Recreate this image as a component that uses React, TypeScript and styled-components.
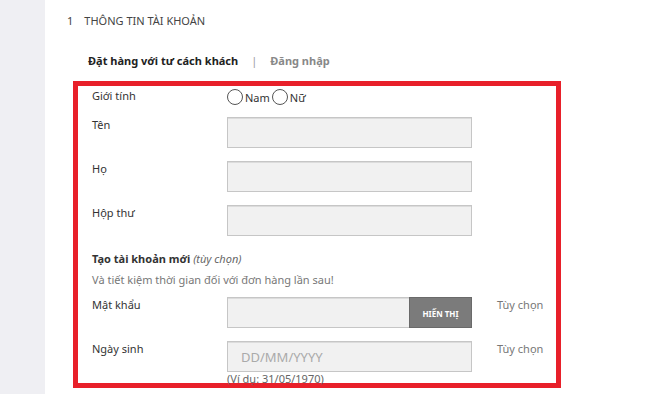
import React from "react";
import styled, { createGlobalStyle } from "styled-components";

const Global = createGlobalStyle`
  html, body { margin: 0; padding: 0; background: #fff; }
  body { font-family: "Noto Sans", "Open Sans", sans-serif; color: #333; }
  * { box-sizing: border-box; }
`;

const Page = styled.div`
  display: flex;
  width: 650px;
  height: 394px;
  overflow: hidden;
`;

const Sidebar = styled.div`
  width: 45px;
  flex: none;
  background: #efeff3;
`;

const Main = styled.div`
  flex: 1;
  padding: 12px 0 0 22px;
`;

const StepHeader = styled.div`
  display: flex;
  gap: 11px;
  font-size: 11px;
  line-height: 18px;
  color: #444;
  text-transform: uppercase;
`;

const Tabs = styled.div`
  display: flex;
  align-items: center;
  margin: 22px 0 0 21px;
  font-size: 11px;
  line-height: 18px;
  font-weight: 700;
  gap: 13px;
`;

const Tab = styled.span<{ $active?: boolean }>`
  color: ${(p) => (p.$active ? "#222" : "#888")};
`;

const Sep = styled.span`
  color: #999;
  font-weight: 400;
`;

const Box = styled.div`
  margin: 11px 0 0 6px;
  width: 488px;
  height: 307px;
  border: 5px solid #e8202a;
  padding: 2px 0 0 14px;
`;

const Row = styled.div<{ $mt: number }>`
  display: grid;
  grid-template-columns: 110px 245px auto;
  column-gap: 25px;
  margin-top: ${(p) => p.$mt}px;
  align-items: start;
`;

const Label = styled.div`
  font-size: 11px;
  line-height: 16px;
  color: #333;
`;

const Optional = styled.div`
  font-size: 11px;
  line-height: 16px;
  color: #777;
  white-space: nowrap;
`;

const Radios = styled.div`
  display: flex;
  align-items: center;
  height: 18px;
  font-size: 11px;
  color: #333;
  gap: 2px;
`;

const Radio = styled.span`
  width: 16px;
  height: 16px;
  border: 1.5px solid #555;
  border-radius: 50%;
  display: inline-block;
`;

const Input = styled.div`
  height: 31px;
  background: #f1f1f1;
  border: 1px solid #c6c6c6;
  box-shadow: inset 0 1px 0 #dcdcdc;
  display: flex;
  align-items: center;
  padding-left: 13px;
  font-size: 13px;
  color: #aaa;
`;

const PasswordWrap = styled.div`
  display: flex;
  height: 31px;
`;

const PasswordInput = styled(Input)`
  flex: 1;
  border-right: none;
`;

const ShowButton = styled.div`
  width: 63px;
  background: #7b7b7b;
  border: 1px solid #6a6a6a;
  color: #fff;
  font-size: 8px;
  font-weight: 700;
  display: flex;
  align-items: center;
  justify-content: center;
  padding-top: 2px;
`;

const Heading = styled.div`
  font-size: 11px;
  line-height: 16px;
  font-weight: 700;
  color: #333;
  margin-top: 15px;
  em {
    font-weight: 400;
    color: #666;
  }
`;

const SubText = styled.div`
  font-size: 11px;
  line-height: 16px;
  color: #777;
  margin-top: 5px;
`;

const Hint = styled.div`
  font-size: 11px;
  line-height: 12px;
  color: #666;
  margin-top: 1px;
`;

const Col = styled.div``;

export default function App() {
  return (
    <>
      <Global />
      <Page>
        <Sidebar />
        <Main>
          <StepHeader>
            <span>1</span>
            <span>Thông tin tài khoản</span>
          </StepHeader>
          <Tabs>
            <Tab $active>Đặt hàng với tư cách khách</Tab>
            <Sep>|</Sep>
            <Tab>Đăng nhập</Tab>
          </Tabs>
          <Box>
            <Row $mt={0}>
              <Label>Giới tính</Label>
              <Radios>
                <Radio />
                <span>Nam</span>
                <Radio />
                <span>Nữ</span>
              </Radios>
            </Row>
            <Row $mt={11}>
              <Label>Tên</Label>
              <Input />
            </Row>
            <Row $mt={13}>
              <Label>Họ</Label>
              <Input />
            </Row>
            <Row $mt={13}>
              <Label>Hộp thư</Label>
              <Input />
            </Row>
            <Heading>
              Tạo tài khoản mới <em>(tùy chọn)</em>
            </Heading>
            <SubText>Và tiết kiệm thời gian đối với đơn hàng lần sau!</SubText>
            <Row $mt={9}>
              <Label>Mật khẩu</Label>
              <PasswordWrap>
                <PasswordInput />
                <ShowButton>HIẾN THỊ</ShowButton>
              </PasswordWrap>
              <Optional>Tùy chọn</Optional>
            </Row>
            <Row $mt={13}>
              <Label>Ngày sinh</Label>
              <Col>
                <Input>DD/MM/YYYY</Input>
                <Hint>(Ví dụ: 31/05/1970)</Hint>
              </Col>
              <Optional>Tùy chọn</Optional>
            </Row>
          </Box>
        </Main>
      </Page>
    </>
  );
}
